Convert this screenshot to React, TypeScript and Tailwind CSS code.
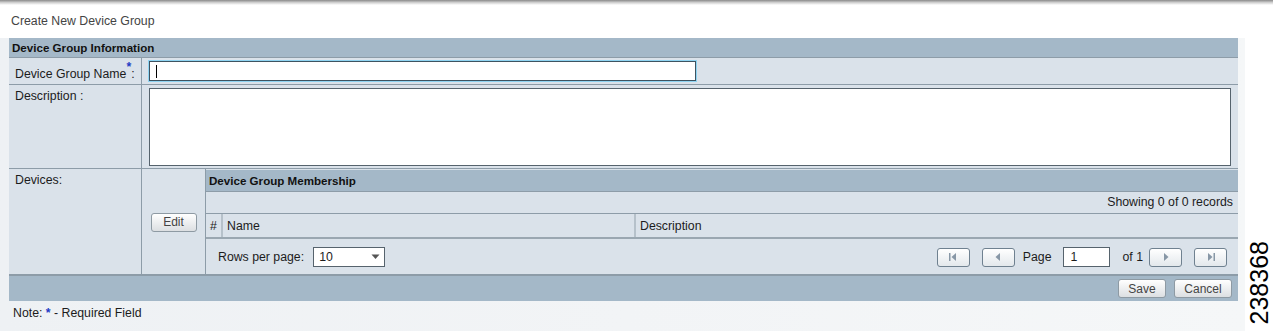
import { useState } from "react";

function PagerButton({ kind }: { kind: "first" | "prev" | "next" | "last" }) {
  return (
    <button className="flex h-[19px] w-[33px] items-center justify-center rounded-[3px] border border-[#6f8190] bg-gradient-to-b from-white to-[#e3e8ec]">
      <svg width="12" height="10" viewBox="0 0 12 10">
        {kind === "first" && (
          <g fill="#8797a6">
            <rect x="2" y="1" width="1.5" height="8" />
            <path d="M9 1 L4.5 5 L9 9 Z" />
          </g>
        )}
        {kind === "prev" && <path d="M8 1 L3.5 5 L8 9 Z" fill="#8797a6" />}
        {kind === "next" && <path d="M4 1 L8.5 5 L4 9 Z" fill="#8797a6" />}
        {kind === "last" && (
          <g fill="#8797a6">
            <path d="M3 1 L7.5 5 L3 9 Z" />
            <rect x="8.5" y="1" width="1.5" height="8" />
          </g>
        )}
      </svg>
    </button>
  );
}

function GrayButton({ label, width }: { label: string; width: string }) {
  return (
    <button
      className={`h-[19px] ${width} rounded-[3px] border border-[#8e9aa3] bg-gradient-to-b from-white to-[#dcdfe2] text-[12px] leading-none text-[#444]`}
    >
      {label}
    </button>
  );
}

export default function App() {
  const [rows, setRows] = useState("10");

  return (
    <div
      className="h-[331px] w-[1273px] overflow-hidden bg-white text-[12.3px] text-[#1c1c1c]"
      style={{ fontFamily: '"Liberation Sans", Arial, sans-serif' }}
    >
      <div className="h-[5px] bg-gradient-to-b from-[#8a8a8a] via-[#cfcfcf] to-white" />
      <div className="flex">
        <div className="w-[1245px]">
          <div className="h-[33px] pl-[11px] pt-[7px] text-[#444]">Create New Device Group</div>

          <div className="bg-gradient-to-r from-[#eef1f4] via-[#f2f4f6] to-[#f5f7f8] pl-[9px] pr-[7px]">
            <div className="w-[1229px] bg-[#dae2ea]">
              {/* section header */}
              <div className="flex h-[20px] items-center border-b border-[#8d9ca8] bg-[#a4b8c8] pl-[3px] text-[11.6px] font-bold text-[#111]">
                Device Group Information
              </div>

              {/* name row */}
              <div className="flex h-[27px] border-b border-[#8d9ca8]">
                <div className="flex w-[133px] items-end border-r border-[#8d9ca8] pb-[1px] pl-[6px]">
                  Device Group Name
                  <span className="relative -top-[7px] font-bold text-[#1f3cc4]">*</span>:
                </div>
                <div className="flex items-center pl-[7px]">
                  <div className="flex h-[20px] w-[547px] items-center border border-[#3e5361] bg-white pl-[6px] shadow-[0_0_0_1px_#8fd4f2]">
                    <span className="h-[13px] w-[1px] bg-black" />
                  </div>
                </div>
              </div>

              {/* description row */}
              <div className="flex h-[84px] border-b border-[#8d9ca8]">
                <div className="w-[133px] border-r border-[#8d9ca8] pl-[6px] pt-[2px]">Description :</div>
                <div className="flex-1 pl-[7px] pr-[7px] pt-[3px]">
                  <textarea className="h-[78px] w-full resize-none border border-[#56636d] bg-white outline-none" />
                </div>
              </div>

              {/* devices row */}
              <div className="flex h-[105px]">
                <div className="w-[133px] border-r border-[#8d9ca8] pl-[6px] pt-[2px]">Devices:</div>
                <div className="flex w-[64px] items-center justify-center border-r border-[#8d9ca8] pt-[1px]">
                  <GrayButton label="Edit" width="w-[46px]" />
                </div>
                <div className="flex flex-1 flex-col">
                  <div className="mt-[1px] flex h-[22px] items-center border-b border-[#8d9ca8] bg-[#a4b8c8] pl-[3px] text-[11.6px] font-bold text-[#111]">
                    Device Group Membership
                  </div>
                  <div className="flex h-[22px] items-center justify-end border-b border-[#8d9ca8] pr-[5px]">
                    Showing 0 of 0 records
                  </div>
                  <div className="flex h-[25px] border-b-2 border-[#9aa7b1]">
                    <div className="flex w-[17px] items-center justify-center border-r-2 border-[#b6c1ca] pt-[2px]">#</div>
                    <div className="flex w-[413px] items-center border-r-2 border-[#b6c1ca] pl-[4px] pt-[2px]">Name</div>
                    <div className="flex flex-1 items-center pl-[4px] pt-[2px]">Description</div>
                  </div>
                  <div className="flex flex-1 items-center pr-[11px] pt-[1px]">
                    <span className="pl-[12px]">Rows per page:</span>
                    <div className="ml-[9px] flex h-[20px] w-[72px] items-center justify-between border border-[#56636d] bg-white pl-[5px] pr-[4px]">
                      <span>{rows}</span>
                      <svg width="9" height="6" viewBox="0 0 9 6" onClick={() => setRows(rows)}>
                        <path d="M0.5 0.5 L8.5 0.5 L4.5 5 Z" fill="#555" />
                      </svg>
                    </div>
                    <div className="ml-auto flex items-center">
                      <PagerButton kind="first" />
                      <div className="ml-[12px]">
                        <PagerButton kind="prev" />
                      </div>
                      <span className="ml-[8px]">Page</span>
                      <div className="ml-[12px] flex h-[20px] w-[47px] items-center border border-[#56636d] bg-white pl-[6px]">1</div>
                      <span className="ml-[12px]">of 1</span>
                      <div className="ml-[6px]">
                        <PagerButton kind="next" />
                      </div>
                      <div className="ml-[12px]">
                        <PagerButton kind="last" />
                      </div>
                    </div>
                  </div>
                </div>
              </div>

              {/* footer */}
              <div className="flex h-[27px] items-center justify-end gap-[8px] border-t-2 border-[#8d9ca8] bg-[#a4b8c8] pr-[6px]">
                <GrayButton label="Save" width="w-[48px]" />
                <GrayButton label="Cancel" width="w-[58px]" />
              </div>
            </div>
            <div className="flex h-[30px] items-center pb-[6px] pl-[4px]">
              Note:&nbsp;<span className="font-bold text-[#1f3cc4]">*</span>&nbsp;- Required Field
            </div>
          </div>
        </div>

        <div className="flex flex-1 items-end justify-center pb-[7px]">
          <span className="rotate-180 text-[25px] leading-none text-black [writing-mode:vertical-rl]">238368</span>
        </div>
      </div>
    </div>
  );
}
